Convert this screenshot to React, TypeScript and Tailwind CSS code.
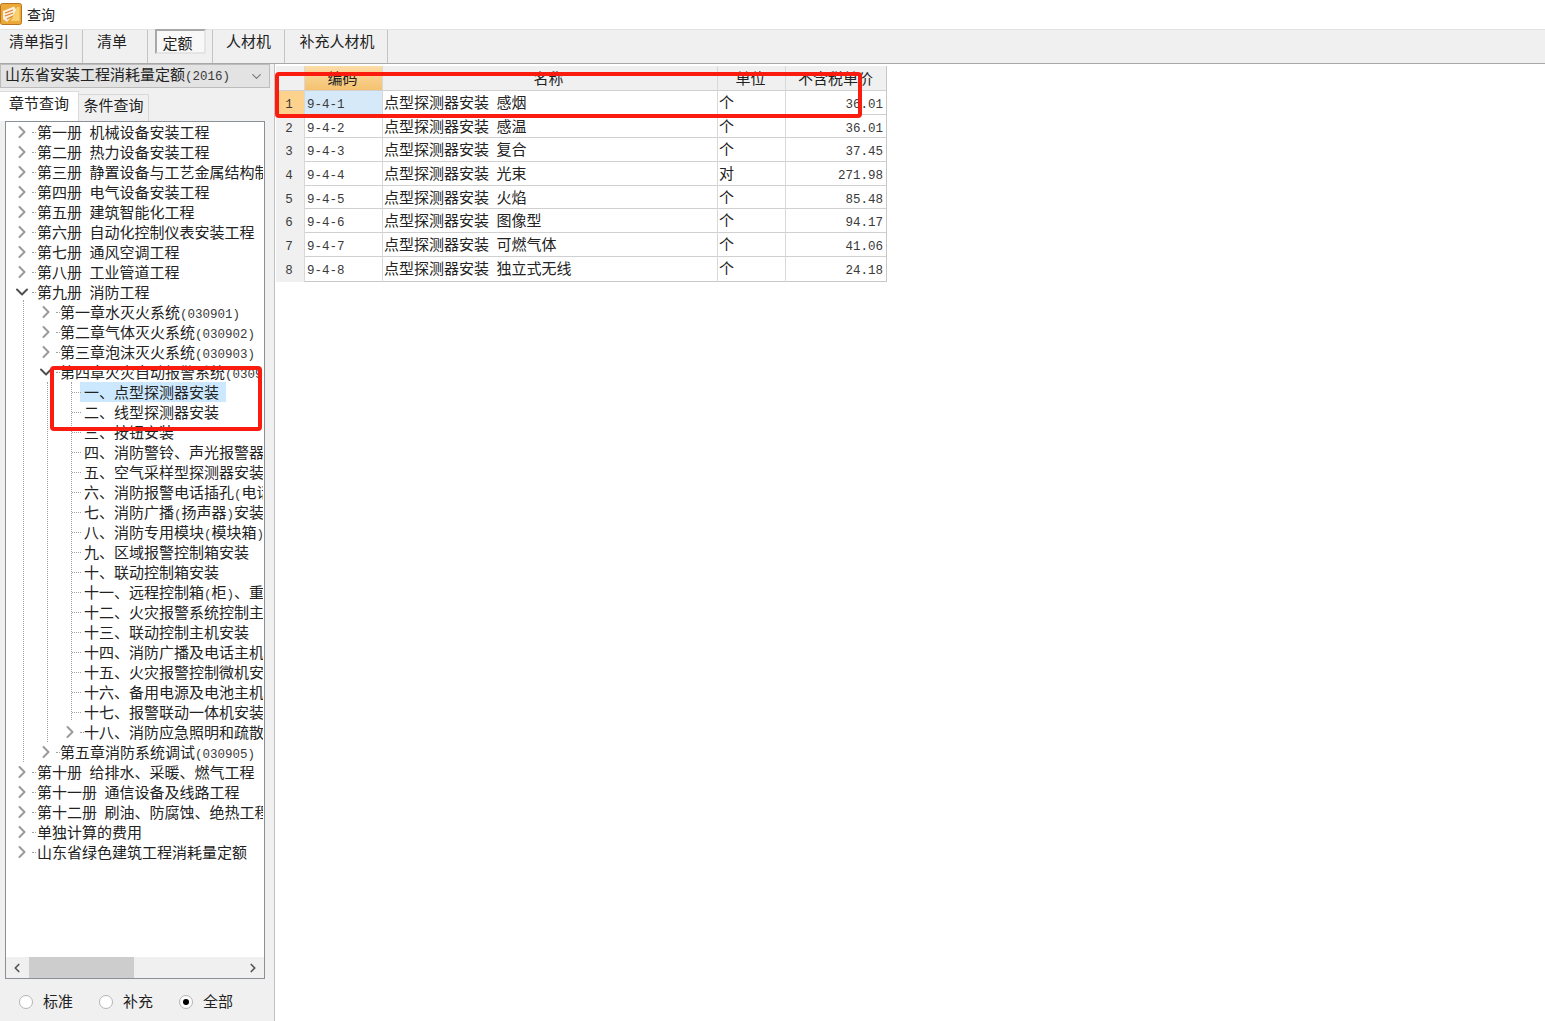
import React from 'react';
import { ChevronDown, ChevronLeft, ChevronRight } from 'lucide-react';

const cjk = "font-['Noto_Sans_CJK_SC','Microsoft_YaHei',sans-serif]";

// half-width runs look like SimSun in the original, mono at 12.5px has about the same advance
const Mixed: React.FC<{ text: string }> = ({ text }) => (
  <>
    {text.split(/([\x00-\x7f]+)/).map((part, i) =>
      /^[\x00-\x7f]+$/.test(part) ? (
        <span key={i} className="font-['Liberation_Mono',monospace] text-[12.5px] text-[#3a3a3a] whitespace-pre">
          {part}
        </span>
      ) : (
        <span key={i}>{part}</span>
      ),
    )}
  </>
);

type TreeRow = { label: string; level: 0 | 1 | 2; icon?: 'closed' | 'open'; selected?: boolean };

const treeRows: TreeRow[] = [
  { label: '第一册 机械设备安装工程', level: 0, icon: 'closed' },
  { label: '第二册 热力设备安装工程', level: 0, icon: 'closed' },
  { label: '第三册 静置设备与工艺金属结构制作安装工程', level: 0, icon: 'closed' },
  { label: '第四册 电气设备安装工程', level: 0, icon: 'closed' },
  { label: '第五册 建筑智能化工程', level: 0, icon: 'closed' },
  { label: '第六册 自动化控制仪表安装工程', level: 0, icon: 'closed' },
  { label: '第七册 通风空调工程', level: 0, icon: 'closed' },
  { label: '第八册 工业管道工程', level: 0, icon: 'closed' },
  { label: '第九册 消防工程', level: 0, icon: 'open' },
  { label: '第一章水灭火系统(030901)', level: 1, icon: 'closed' },
  { label: '第二章气体灭火系统(030902)', level: 1, icon: 'closed' },
  { label: '第三章泡沫灭火系统(030903)', level: 1, icon: 'closed' },
  { label: '第四章火灾自动报警系统(030904)', level: 1, icon: 'open' },
  { label: '一、点型探测器安装', level: 2, selected: true },
  { label: '二、线型探测器安装', level: 2 },
  { label: '三、按钮安装', level: 2 },
  { label: '四、消防警铃、声光报警器安装', level: 2 },
  { label: '五、空气采样型探测器安装', level: 2 },
  { label: '六、消防报警电话插孔(电话)安装', level: 2 },
  { label: '七、消防广播(扬声器)安装', level: 2 },
  { label: '八、消防专用模块(模块箱)安装', level: 2 },
  { label: '九、区域报警控制箱安装', level: 2 },
  { label: '十、联动控制箱安装', level: 2 },
  { label: '十一、远程控制箱(柜)、重复显示器', level: 2 },
  { label: '十二、火灾报警系统控制主机安装', level: 2 },
  { label: '十三、联动控制主机安装', level: 2 },
  { label: '十四、消防广播及电话主机安装', level: 2 },
  { label: '十五、火灾报警控制微机安装', level: 2 },
  { label: '十六、备用电源及电池主机安装', level: 2 },
  { label: '十七、报警联动一体机安装', level: 2 },
  { label: '十八、消防应急照明和疏散指示', level: 2, icon: 'closed' },
  { label: '第五章消防系统调试(030905)', level: 1, icon: 'closed' },
  { label: '第十册 给排水、采暖、燃气工程', level: 0, icon: 'closed' },
  { label: '第十一册 通信设备及线路工程', level: 0, icon: 'closed' },
  { label: '第十二册 刷油、防腐蚀、绝热工程', level: 0, icon: 'closed' },
  { label: '单独计算的费用', level: 0, icon: 'closed' },
  { label: '山东省绿色建筑工程消耗量定额', level: 0, icon: 'closed' },
];

const tableRows = [
  ['9-4-1', '点型探测器安装 感烟', '个', '36.01'],
  ['9-4-2', '点型探测器安装 感温', '个', '36.01'],
  ['9-4-3', '点型探测器安装 复合', '个', '37.45'],
  ['9-4-4', '点型探测器安装 光束', '对', '271.98'],
  ['9-4-5', '点型探测器安装 火焰', '个', '85.48'],
  ['9-4-6', '点型探测器安装 图像型', '个', '94.17'],
  ['9-4-7', '点型探测器安装 可燃气体', '个', '41.06'],
  ['9-4-8', '点型探测器安装 独立式无线', '个', '24.18'],
];

const levelPad = ['pl-[31px]', 'pl-[54px]', 'pl-[78px]'];
const chevronLeft = ['left-[6px]', 'left-[30px]', 'left-[54px]'];
const stubLeft = ['left-[26px]', 'left-[50px]', 'left-[74px]'];

const Tree: React.FC = () => (
  <div className="relative">
    {/* dotted guides */}
    <div className="absolute left-[17px] top-[178px] h-[462px] w-0 border-l border-dotted border-[#a0a0a0]" />
    <div className="absolute left-[41px] top-[260px] h-[360px] w-0 border-l border-dotted border-[#a0a0a0]" />
    <div className="absolute left-[65px] top-[260px] h-[338px] w-0 border-l border-dotted border-[#a0a0a0]" />
    {treeRows.map((row) => (
      <div key={row.label} className={`relative h-5 leading-5 whitespace-nowrap ${levelPad[row.level]}`}>
        {row.icon === 'closed' && (
          <ChevronRight className={`absolute top-0 size-5 text-[#9a9a9a] ${chevronLeft[row.level]}`} strokeWidth={2.4} />
        )}
        {row.icon === 'open' && (
          <ChevronDown className={`absolute top-0 size-5 text-[#505050] ${chevronLeft[row.level]}`} strokeWidth={2.4} />
        )}
        {row.level === 2 && !row.icon && (
          <div className="absolute left-[66px] top-[10px] w-[9px] border-t border-dotted border-[#a0a0a0]" />
        )}
        {row.icon && <div className={`absolute top-[10px] w-[4px] border-t border-dotted border-[#a0a0a0] ${stubLeft[row.level]}`} />}
        <span className={`inline-block pl-[4px] pr-[7px] -ml-[4px] ${row.selected ? 'bg-[#cce8ff]' : ''}`}>
          <Mixed text={row.label} />
        </span>
      </div>
    ))}
  </div>
);

const Radio: React.FC<{ label: string; checked?: boolean }> = ({ label, checked }) => (
  <div className="flex items-center gap-[10px] w-[80px]">
    <div className="flex size-[14px] items-center justify-center rounded-full border border-[#b4b4b4] bg-white">
      {checked && <div className="size-[6px] rounded-full bg-black" />}
    </div>
    <span>{label}</span>
  </div>
);

const Tab: React.FC<{ label: string; width: string; active?: boolean; shift?: string }> = ({ label, width, active, shift }) => (
  <div className={`flex h-full items-center justify-center border-r border-[#c4c4c4] ${width}`}>
    {active ? (
      <div className="-mt-[10px] flex h-[25px] w-[51px] items-center justify-center border-2 border-[#a8a8a8] border-b-[#e4e4e4] border-r-[#e4e4e4] bg-[#f8f8f8] pt-[3px] pr-[5px] leading-[20px]">
        {label}
      </div>
    ) : (
      <span className={`-mt-[10px] ${shift ?? ''}`}>{label}</span>
    )}
  </div>
);

export default function App() {
  return (
    <div className={`relative flex h-[1021px] w-[1545px] flex-col overflow-hidden bg-white text-[15px] text-[#222222] ${cjk}`}>
      {/* title bar */}
      <div className="flex h-[29px] items-center gap-[5px] pb-[1px]">
        <svg width="22" height="22" viewBox="0 0 22 22" className="-mt-[1px]">
          <rect x="0.5" y="0.5" width="21" height="21" rx="2" fill="#eda83a" stroke="#b8741f" />
          <path d="M3 8 L14 3.5 L17 8 L7 19 L3 16 Z" fill="#fbeedb" />
          <path d="M5 10 L13 7 M5 13 L13 10 M7 16 L13 13" stroke="#d9822b" strokeWidth="1.3" />
          <path d="M17 4 L19.5 4 L19.5 18 L11 18 Z" fill="#f7d070" />
        </svg>
        <span className="text-[14px]">查询</span>
      </div>

      {/* top tabs */}
      <div className="flex h-[35px] items-center border-y border-t-[#e2e2e2] border-b-[#a8a8a8] bg-[#f0f0f0]">
        <Tab label="清单指引" width="w-[83px]" shift="-ml-[4px]" />
        <Tab label="清单" width="w-[65px]" shift="-ml-[6px]" />
        <Tab label="定额" width="w-[65px]" active />
        <Tab label="人材机" width="w-[72px]" />
        <Tab label="补充人材机" width="w-[103px]" shift="ml-[2px]" />
      </div>

      <div className="flex min-h-0 flex-1">
        {/* left panel */}
        <div className="flex w-[275px] shrink-0 flex-col border-r border-[#c0c0c0] bg-[#f0f0f0]">
          <div className="flex h-[24px] w-[270px] items-center justify-between border border-[#bcbcbc] bg-[#e3e3e3] pl-[4px] pr-[5px]">
            <span className="-mt-[2px] whitespace-nowrap">
              <Mixed text="山东省安装工程消耗量定额(2016)" />
            </span>
            <ChevronDown className="size-[15px] text-[#808080]" />
          </div>
          <div className="mt-[3px] flex h-[30px] items-end pl-0">
            <div className="flex h-[30px] w-[79px] items-center justify-center border-t border-r border-[#dcdcdc] bg-white pb-[7px]">
              章节查询
            </div>
            <div className="flex h-[27px] w-[70px] items-center justify-center border-t border-r border-[#d8d8d8] bg-[#f0f0f0] pb-[6px]">
              条件查询
            </div>
          </div>
          <div className="ml-[5px] flex h-[858px] w-[260px] flex-col border border-[#8a8f98] bg-white">
            <div className="mr-[1px] min-h-0 flex-1 overflow-hidden">
              <Tree />
            </div>
            <div className="flex h-[21px] items-center bg-[#f0f0f0]">
              <ChevronLeft className="ml-[4px] size-[14px] text-[#555555]" strokeWidth={3} />
              <div className="ml-[5px] h-full w-[105px] bg-[#cdcdcd]" />
              <ChevronRight className="ml-auto mr-[4px] size-[14px] text-[#555555]" strokeWidth={3} />
            </div>
          </div>
          <div className="flex flex-1 items-center pl-[19px] pt-[3px]">
            <Radio label="标准" />
            <Radio label="补充" />
            <Radio label="全部" checked />
          </div>
        </div>

        {/* result table */}
        <div className="min-w-0 flex-1 pt-[2px]">
          <div className="ml-[1px] w-[611px] border-b border-r border-[#c8c8c8] bg-white">
            <div className="grid h-[25px] grid-cols-[29px_78px_335px_68px_100px] border-b border-[#d0d0d0] bg-[#f0f0f0] text-center leading-[23px]">
              <div className="border-r border-[#d8d8d8]" />
              <div className="border-r border-[#d8d8d8] bg-gradient-to-b from-[#fcdca8] to-[#f5c26e] pr-[2px]">编码</div>
              <div className="border-r border-[#d8d8d8] pr-[3px]">名称</div>
              <div className="border-r border-[#d8d8d8] pr-[2px]">单位</div>
              <div className="pr-[1px]">不含税单价</div>
            </div>
            {tableRows.map((row, i) => (
              <div key={row[0]} className="grid h-[23.7px] grid-cols-[29px_78px_335px_68px_100px] border-b border-[#d0d0d0] leading-[21px] last:border-b-0">
                <div className={`border-r border-[#d8d8d8] pr-[2px] text-center ${i === 0 ? 'bg-[#fdd28c]' : 'bg-[#f0f0f0]'}`}>
                  <Mixed text={String(i + 1)} />
                </div>
                <div className={`border-r border-[#d8d8d8] pl-[2px] ${i === 0 ? 'bg-[#d6e9f8]' : ''}`}>
                  <Mixed text={row[0]} />
                </div>
                <div className="border-r border-[#d8d8d8] pl-[1px] whitespace-nowrap">
                  <Mixed text={row[1]} />
                </div>
                <div className="border-r border-[#d8d8d8] pl-[1px]">{row[2]}</div>
                <div className="pr-[3px] text-right">
                  <Mixed text={row[3]} />
                </div>
              </div>
            ))}
          </div>
        </div>
      </div>

      {/* red markup drawn over the screenshot */}
      <div className="absolute left-[275px] top-[72px] h-[46px] w-[587px] rounded-[4px] border-[4px] border-[#fb1c10]" />
      <div className="absolute left-[50px] top-[366px] h-[65px] w-[212px] rounded-[4px] border-[4px] border-[#fb1c10]" />
    </div>
  );
}
